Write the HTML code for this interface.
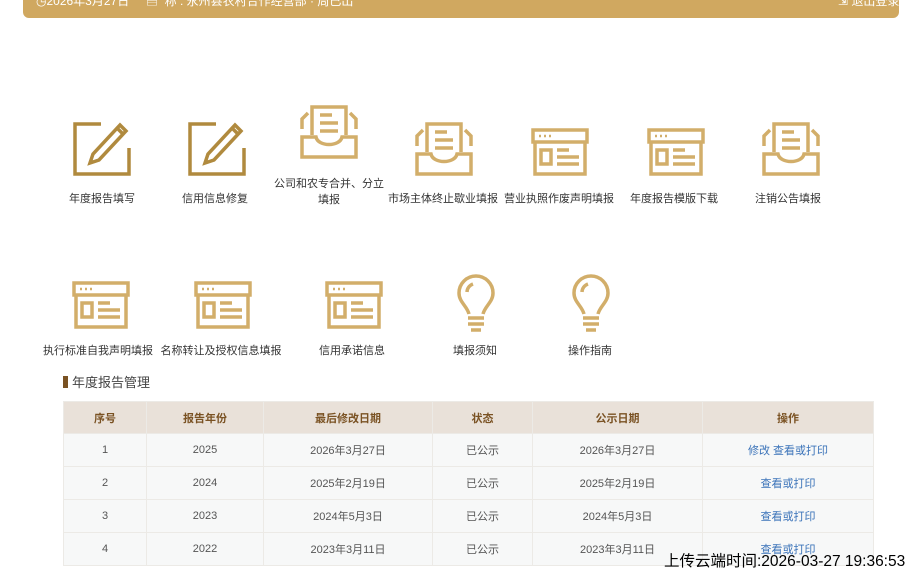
<!DOCTYPE html>
<html><head><meta charset="utf-8">
<style>
body{margin:0;width:914px;height:573px;overflow:hidden;background:#fff;font-family:"Liberation Sans","Noto Sans CJK SC",sans-serif;position:relative;color:#333}
.hdr{position:absolute;left:23px;top:-10px;width:876px;height:28px;background:#d0a860;border-radius:0 0 6px 6px;overflow:hidden;color:#fff;font-size:12px}
.hdr span{position:absolute;top:2px;white-space:nowrap}
.it{position:absolute;width:130px;text-align:center;font-size:11px;color:#333;line-height:16px;white-space:nowrap}
.ic{position:absolute}
table{position:absolute;left:63px;top:401px;border-collapse:collapse;font-size:11px;color:#555}
td,th{border:1px solid #eceae6;text-align:center;height:32px;padding:0}
th{background:#e9e1d9;color:#7a5223;font-weight:bold;height:31px}
td{background:#f7f8f8}
a{color:#3b73b9;text-decoration:none}
.ttl{position:absolute;left:63px;top:375px;font-size:13px;color:#444;line-height:16px}
.ttl:before{content:"";display:inline-block;width:5px;height:12px;background:#7a5223;margin-right:4px;vertical-align:-1px}
.stamp{position:absolute;left:664px;top:549px;font-size:15.5px;color:#000;white-space:nowrap}
</style></head><body>
<div class="hdr">
<span style="left:13px">◷2026年3月27日</span>
<span style="left:123px">▤ &nbsp;称 : 永州县农村合作经营部 · 周已出</span>
<span style="left:815px">⇲ 退出登录</span>
</div>

<svg width="0" height="0" style="position:absolute">
<defs>
<g id="pen" fill="none" stroke="#b08a3e" stroke-width="3.5">
<path d="M28 2H2V52H56V26"/>
<path d="M47 3L53 9L26 38L17 41L20 32Z"/><path d="M44 6L50 12" />
</g>
<g id="tray" fill="none" stroke="#d2ae6a" stroke-width="3.5">
<path d="M12 30V2H46V30"/><path d="M20 10H32M20 18H38M20 26H38"/>
<path d="M8 8L2 14V24M50 8L56 14V24"/>
<path d="M2 52V32H16C18 42 40 42 42 32H56V52Z"/>
</g>
<g id="win" fill="none" stroke="#d2ae6a" stroke-width="3.5">
<path d="M2 2H56V14H2Z"/><path d="M4 14V46H54V14"/>
<rect x="10" y="22" width="10" height="14"/><path d="M26 22H38M26 29H48M26 36H48"/>
<path d="M8 8H10M13 8H15M18 8H20" stroke-width="2.5"/>
</g>
<g id="bulb" fill="none" stroke="#d2ae6a" stroke-width="3.5">
<path d="M12 40C10 32 2 28 2 19A17 17 0 0 1 36 19C36 28 28 32 26 40"/>
<path d="M10 18A9 9 0 0 1 16 10"/>
<path d="M11 44H27M11 50H27M14 56H24"/>
</g>
</defs></svg>

<svg class="ic" style="left:73px;top:122px" width="60" height="56"><use href="#pen"/></svg>
<svg class="ic" style="left:188px;top:122px" width="60" height="56"><use href="#pen"/></svg>
<svg class="ic" style="left:300px;top:105px" width="60" height="56"><use href="#tray"/></svg>
<svg class="ic" style="left:415px;top:122px" width="60" height="56"><use href="#tray"/></svg>
<svg class="ic" style="left:531px;top:128px" width="60" height="50"><use href="#win"/></svg>
<svg class="ic" style="left:647px;top:128px" width="60" height="50"><use href="#win"/></svg>
<svg class="ic" style="left:762px;top:122px" width="60" height="56"><use href="#tray"/></svg>

<div class="it" style="left:37px;top:191px">年度报告填写</div>
<div class="it" style="left:150px;top:191px">信用信息修复</div>
<div class="it" style="left:264px;top:176px">公司和农专合并、分立<br>填报</div>
<div class="it" style="left:378px;top:191px">市场主体终止歇业填报</div>
<div class="it" style="left:494px;top:191px">营业执照作废声明填报</div>
<div class="it" style="left:609px;top:191px">年度报告模版下载</div>
<div class="it" style="left:723px;top:191px">注销公告填报</div>

<svg class="ic" style="left:72px;top:281px" width="60" height="50"><use href="#win"/></svg>
<svg class="ic" style="left:194px;top:281px" width="60" height="50"><use href="#win"/></svg>
<svg class="ic" style="left:325px;top:281px" width="60" height="50"><use href="#win"/></svg>
<svg class="ic" style="left:457px;top:274px" width="40" height="60"><use href="#bulb"/></svg>
<svg class="ic" style="left:572px;top:274px" width="40" height="60"><use href="#bulb"/></svg>

<div class="it" style="left:33px;top:343px">执行标准自我声明填报</div>
<div class="it" style="left:156px;top:343px">名称转让及授权信息填报</div>
<div class="it" style="left:287px;top:343px">信用承诺信息</div>
<div class="it" style="left:410px;top:343px">填报须知</div>
<div class="it" style="left:525px;top:343px">操作指南</div>

<div class="ttl">年度报告管理</div>
<table>
<tr><th style="width:82px">序号</th><th style="width:116px">报告年份</th><th style="width:168px">最后修改日期</th><th style="width:99px">状态</th><th style="width:169px">公示日期</th><th style="width:170px">操作</th></tr>
<tr><td>1</td><td>2025</td><td>2026年3月27日</td><td>已公示</td><td>2026年3月27日</td><td><a>修改</a> <a>查看或打印</a></td></tr>
<tr><td>2</td><td>2024</td><td>2025年2月19日</td><td>已公示</td><td>2025年2月19日</td><td><a>查看或打印</a></td></tr>
<tr><td>3</td><td>2023</td><td>2024年5月3日</td><td>已公示</td><td>2024年5月3日</td><td><a>查看或打印</a></td></tr>
<tr><td>4</td><td>2022</td><td>2023年3月11日</td><td>已公示</td><td>2023年3月11日</td><td><a>查看或打印</a></td></tr>
</table>
<div class="stamp">上传云端时间:2026-03-27 19:36:53</div>
</body></html>
